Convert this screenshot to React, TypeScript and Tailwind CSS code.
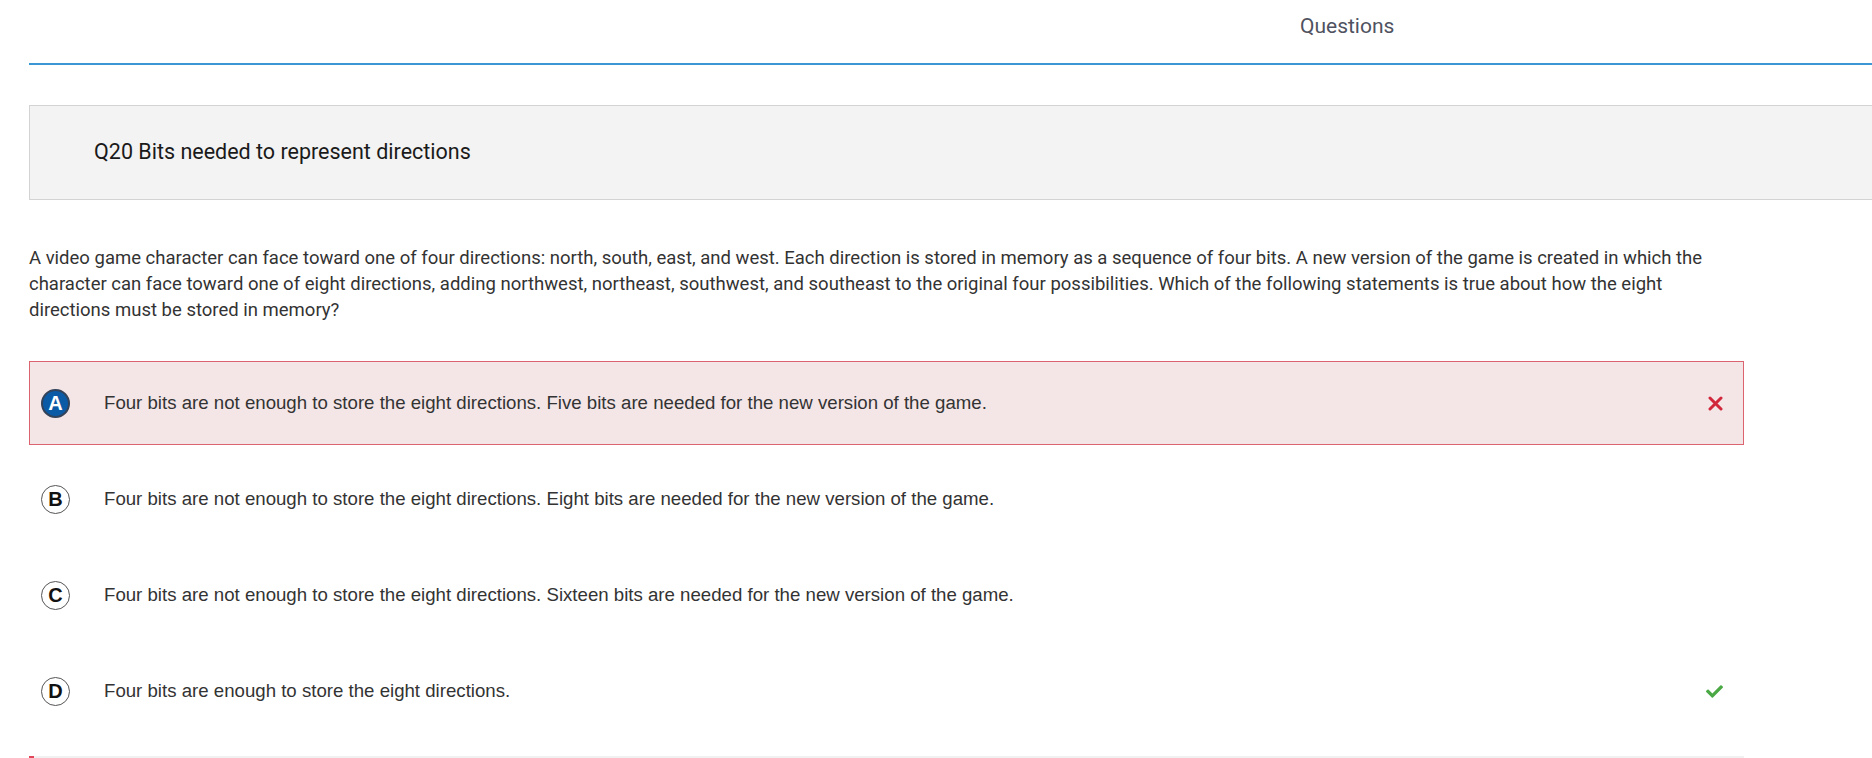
import React from 'react';
import { FaCheck } from 'react-icons/fa';

type Choice = {
  letter: string;
  text: string;
  selected?: boolean;
  result?: 'wrong' | 'right';
};

const choices: Choice[] = [
  {
    letter: 'A',
    text: 'Four bits are not enough to store the eight directions. Five bits are needed for the new version of the game.',
    selected: true,
    result: 'wrong',
  },
  {
    letter: 'B',
    text: 'Four bits are not enough to store the eight directions. Eight bits are needed for the new version of the game.',
  },
  {
    letter: 'C',
    text: 'Four bits are not enough to store the eight directions. Sixteen bits are needed for the new version of the game.',
  },
  {
    letter: 'D',
    text: 'Four bits are enough to store the eight directions.',
    result: 'right',
  },
];

const roboto = { fontFamily: 'Roboto, "Liberation Sans", sans-serif' };
const arial = { fontFamily: '"Liberation Sans", Arial, sans-serif' };

// thick "times" mark like the one shown next to a wrong answer
const WrongMark = () => (
  <svg width="15" height="15" viewBox="0 0 15 15" className="shrink-0">
    <path d="M2 2 L13 13 M13 2 L2 13" stroke="#d2283c" strokeWidth="3" strokeLinecap="round" />
  </svg>
);

/**
 * Single answer row
 */
const ChoiceRow: React.FC<{ choice: Choice }> = ({ choice }) => {
  return (
    <div
      className={`flex items-center h-[84px] border pl-[11px] pr-[20px] ${
        choice.selected ? 'bg-[#f4e6e7] border-[#dc6370]' : 'border-transparent'
      }`}
    >
      <div
        className={`w-[29px] h-[29px] rounded-full flex items-center justify-center text-[20px] font-bold shrink-0 ${
          choice.selected
            ? 'bg-[#0b5aa6] border-2 border-[#33435a] text-white'
            : 'bg-white border border-[#555] text-[#111]'
        }`}
        style={arial}
      >
        {choice.letter}
      </div>
      <div className="ml-[34px] flex-1 text-[18.65px] text-[#333]" style={arial}>
        {choice.text}
      </div>
      {choice.result === 'wrong' && <WrongMark />}
      {choice.result === 'right' && <FaCheck className="text-[#4aa845] w-[17px] h-[17px]" />}
    </div>
  );
};

export default function App() {
  return (
    <div className="bg-white min-h-screen pl-[29px] overflow-hidden h-[758px]" style={roboto}>
      {/* Header */}
      <div className="h-[65px] border-b-2 border-[#3a97d4] flex items-center pl-[1271px]">
        <span className="text-[21px] text-[#4f5260] -mt-[10px]">Questions</span>
      </div>

      {/* Question title */}
      <div className="mt-[40px] h-[95px] bg-[#f3f3f3] border border-r-0 border-[#d3d3d3] flex items-center pl-[64px]">
        <h2 className="text-[21.5px] font-normal text-[#1a1a1a]">Q20 Bits needed to represent directions</h2>
      </div>

      <div className="pr-[128px]">
        {/* Prompt */}
        <p className="mt-[45px] text-[18.5px] leading-[26px] text-[#333]">
          A video game character can face toward one of four directions: north, south, east, and west. Each direction
          is stored in memory as a sequence of four bits. A new version of the game is created in which the character
          can face toward one of eight directions, adding northwest, northeast, southwest, and southeast to the original
          four possibilities. Which of the following statements is true about how the eight directions must be stored in
          memory?
        </p>

        {/* Choices */}
        <div className="mt-[38px] flex flex-col gap-[12px]">
          {choices.map((c) => (
            <ChoiceRow key={c.letter} choice={c} />
          ))}
        </div>

        {/* Next panel (cut off) */}
        <div className="mt-[23px] h-[60px] bg-[#f1f1f1] border-l-[5px] border-[#e0455a]" />
      </div>
    </div>
  );
}
